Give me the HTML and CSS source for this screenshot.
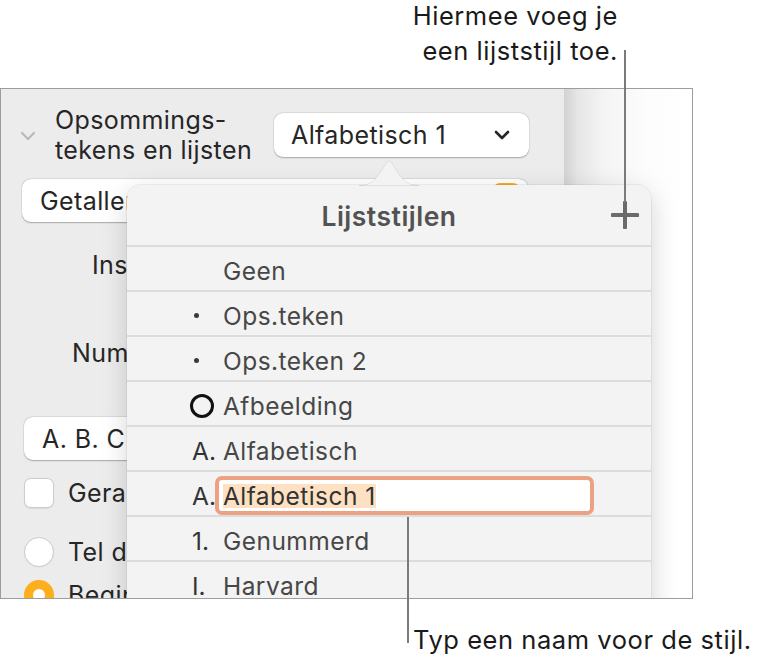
FILE: index.html
```html
<!DOCTYPE html>
<html lang="nl">
<head>
<meta charset="utf-8">
<title>Lijststijlen</title>
<link rel="stylesheet" href="styles.css">
</head>
<body>
<div class="page">
  <div class="callout callout-top">Hiermee voeg je<br>een lijststijl toe.</div>
  <div class="frame">
    <div class="sidebar">
      <div class="section-head">
        <svg class="disclosure" width="16" height="10" viewBox="0 0 16 10"><path d="M2 2 L8 8 L14 2" fill="none" stroke="#b9b9b9" stroke-width="2.2" stroke-linecap="round" stroke-linejoin="round"/></svg>
        <div class="section-title">Opsommings-<br>tekens en lijsten</div>
        <div class="select">
          <span>Alfabetisch 1</span>
          <svg width="16" height="10" viewBox="0 0 16 10"><path d="M2 2 L8 8 L14 2" fill="none" stroke="#262626" stroke-width="2.6" stroke-linecap="round" stroke-linejoin="round"/></svg>
        </div>
      </div>
      <div class="btn btn-wide"><span>Getallen</span><span class="swatch"></span></div>
      <div class="label label-ins">Inspr.</div>
      <div class="label label-num">Nummer</div>
      <div class="btn btn-abc">A. B. C.</div>
      <div class="check-row"><span class="checkbox"></span>Gerang</div>
      <div class="check-row radio-row"><span class="radio"></span>Tel door</div>
      <div class="check-row radio-row2"><span class="radio on"></span>Begin</div>
    </div>
    <div class="backdrop"></div>

    <div class="popover">
      <svg class="arrow" width="60" height="28" viewBox="0 0 60 28"><path d="M0 27.5 C11 27.5 15 23 21 15 L27 5.5 Q30 1 33 5.5 L39 15 C45 23 49 27.5 60 27.5 Z" fill="#f3f3f3" stroke="rgba(0,0,0,0.07)" stroke-width="1"/></svg>
      <div class="pop-head">
        <span>Lijststijlen</span>
        <svg class="plus" width="28" height="28" viewBox="0 0 28 28"><path d="M14 1.5 V26.5 M1.5 14 H26.5" fill="none" stroke="#6b6b6b" stroke-width="4" stroke-linecap="round"/></svg>
      </div>
      <div class="row"><span class="prefix"></span><span class="name">Geen</span></div>
      <div class="row"><span class="prefix"><span class="dot"></span></span><span class="name">Ops.teken</span></div>
      <div class="row"><span class="prefix"><span class="dot"></span></span><span class="name">Ops.teken 2</span></div>
      <div class="row"><span class="prefix"><span class="ring"></span></span><span class="name">Afbeelding</span></div>
      <div class="row"><span class="prefix">A.</span><span class="name">Alfabetisch</span></div>
      <div class="row"><span class="prefix">A.</span><span class="field"><span class="sel">Alfabetisch 1</span></span></div>
      <div class="row"><span class="prefix">1.</span><span class="name">Genummerd</span></div>
      <div class="row"><span class="prefix">I.</span><span class="name">Harvard</span></div>
    </div>
  </div>
  <div class="leader leader-top"></div>
  <div class="leader leader-bottom"></div>
  <div class="callout callout-bottom">Typ een naam voor de stijl.</div>
</div>
</body>
</html>
```

FILE: styles.css
```css
html, body {
  margin: 0;
  background: #ffffff;
}

body {
  font-family: Inter, "Noto Sans", sans-serif;
}

.page {
  position: relative;
  width: 766px;
  height: 668px;
  padding-top: 88px;
  box-sizing: border-box;
  overflow: hidden;
}

.frame {
  position: relative;
  width: 693px;
  height: 511px;
  border: 1px solid #9d9d9d;
  box-sizing: border-box;
  display: flex;
  overflow: hidden;
}

.sidebar {
  width: 563px;
  flex: none;
  background: #ececec;
  padding-top: 16px;
  box-sizing: border-box;
  display: flex;
  flex-direction: column;
  align-items: flex-start;
  color: #262626;
  font-size: 25px;
  letter-spacing: 0.4px;
}

.sidebar > * {
  flex-shrink: 0;
}

.backdrop {
  flex: 1;
  background: linear-gradient(to right, #d2d2d2 0, #e6e6e6 14px, #f4f4f4 40px, #fcfcfc 80px, #ffffff 100%);
}

.section-head {
  display: flex;
  align-items: center;
  width: 100%;
  height: 60px;
  padding-left: 19px;
  box-sizing: border-box;
}

.disclosure {
  flex: none;
  margin-top: 2px;
}

.section-title {
  margin-left: 19px;
  line-height: 30px;
}

.btn,
.select {
  background: #ffffff;
  border-radius: 9px;
  box-shadow: 0 0.5px 1.5px rgba(0, 0, 0, 0.28), 0 0 0 0.5px rgba(0, 0, 0, 0.06);
  box-sizing: border-box;
  display: flex;
  align-items: center;
}

.select {
  margin-left: auto;
  margin-right: 35px;
  width: 255px;
  height: 44px;
  padding: 0 19px 0 17px;
  justify-content: space-between;
}

.btn-wide {
  margin-top: 14px;
  margin-left: 21px;
  width: 506px;
  height: 43px;
  padding-left: 18px;
}

.swatch {
  margin-left: auto;
  margin-right: 8px;
  align-self: flex-start;
  margin-top: 4px;
  width: 27px;
  height: 30px;
  border-radius: 7px;
  background: #f7ae2a;
}

.label {
  line-height: 30px;
}

.label-ins {
  margin-top: 28px;
  margin-left: 91px;
}

.label-num {
  margin-top: 58px;
  margin-left: 71px;
}

.btn-abc {
  margin-top: 49px;
  margin-left: 23px;
  width: 300px;
  height: 43px;
  padding-left: 18px;
}

.check-row {
  margin-top: 18px;
  margin-left: 23px;
  display: flex;
  align-items: center;
  gap: 14px;
  height: 30px;
  white-space: nowrap;
}

.radio-row {
  margin-top: 29px;
}

.radio-row2 {
  margin-top: 13px;
}

.checkbox,
.radio {
  width: 30px;
  height: 30px;
  flex: none;
  box-sizing: border-box;
  background: #ffffff;
  border: 1px solid #cdcdcd;
  box-shadow: 0 0.5px 1px rgba(0, 0, 0, 0.08);
}

.checkbox {
  border-radius: 7px;
}

.radio {
  border-radius: 50%;
}

.radio.on {
  border: 9px solid #fcae1e;
}

/* Popover */
.popover {
  position: absolute;
  left: 126px;
  top: 96px;
  width: 524px;
  height: 440px;
  background: #f3f3f3;
  border-radius: 14px;
  box-shadow: 0 8px 26px rgba(0, 0, 0, 0.17), 0 0 0 1px rgba(0, 0, 0, 0.05);
  font-size: 24.5px;
  letter-spacing: 0.45px;
  color: #474747;
}

.arrow {
  position: absolute;
  left: 232px;
  top: -27px;
}

.pop-head {
  position: relative;
  height: 58px;
  padding-top: 2px;
  border-bottom: 2px solid #dcdcdc;
  display: flex;
  align-items: center;
  justify-content: center;
  font-weight: 600;
  color: #525252;
  font-size: 26.5px;
  letter-spacing: 0.5px;
}

.plus {
  position: absolute;
  left: 484px;
  top: 16px;
}

.row {
  height: 39px;
  padding-top: 4px;
  padding-left: 65px;
  border-bottom: 2px solid #dcdcdc;
  display: flex;
  align-items: center;
}

.prefix {
  width: 23px;
  flex: none;
  display: flex;
  align-items: center;
  color: #333333;
  letter-spacing: 0;
}

.name {
  margin-left: 8px;
}

.dot {
  width: 5px;
  height: 5px;
  border-radius: 50%;
  background: #3a3a3a;
  margin-left: 2px;
}

.ring {
  width: 24px;
  height: 24px;
  border: 3.5px solid #111111;
  border-radius: 50%;
  box-sizing: border-box;
  margin-left: -2px;
}

.field {
  width: 379px;
  height: 39px;
  box-sizing: border-box;
  border: 4px solid #eaa283;
  border-radius: 7px;
  background: #ffffff;
  padding-left: 4px;
  display: flex;
  align-items: center;
}

.sel {
  background: #fde1c2;
  line-height: 24px;
  color: #333333;
}

/* Callouts */
.callout {
  position: absolute;
  font-size: 25.5px;
  letter-spacing: 0.55px;
  color: #1a1a1a;
  white-space: nowrap;
}

.callout-top {
  right: 148px;
  top: -2px;
  text-align: right;
  line-height: 35px;
}

.callout-bottom {
  left: 413px;
  top: 625px;
  line-height: 30px;
}

.leader {
  position: absolute;
  width: 2px;
  background: #7b7b7b;
}

.leader-top {
  left: 624px;
  top: 50px;
  height: 152px;
}

.leader-bottom {
  left: 407px;
  top: 517px;
  height: 126px;
}
```
